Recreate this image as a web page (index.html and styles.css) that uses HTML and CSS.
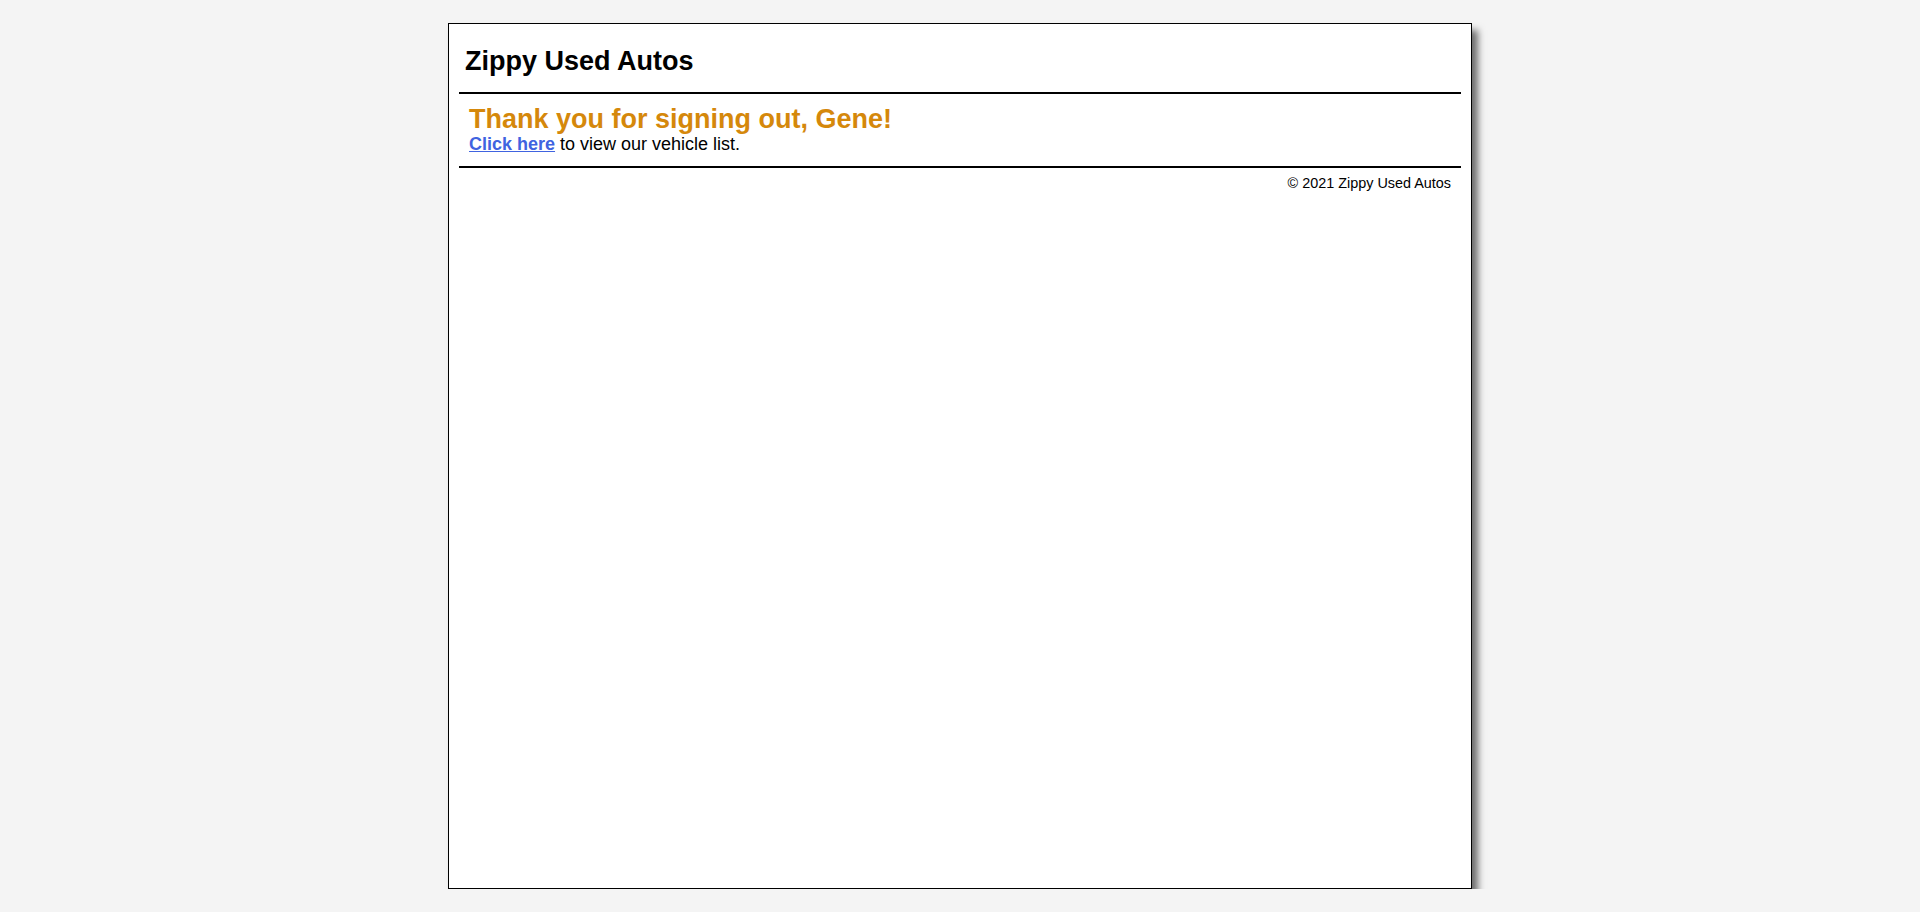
FILE: index.html
```html
<!DOCTYPE html>
<html lang="en">
<head>
<meta charset="utf-8">
<title>Zippy Used Autos</title>
<link rel="stylesheet" href="styles.css">
</head>
<body>
<div class="page">
  <header class="site-header">
    <h1 class="site-title">Zippy Used Autos</h1>
  </header>
  <main class="content">
    <h2 class="signout-heading">Thank you for signing out, Gene!</h2>
    <p class="signout-text"><a class="vehicle-link" href="#">Click here</a> to view our vehicle list.</p>
  </main>
  <footer class="site-footer">© 2021 Zippy Used Autos</footer>
</div>
</body>
</html>
```

FILE: styles.css
```css
html, body {
  margin: 0;
  padding: 0;
}

body {
  background: #f4f4f4;
  font-family: "Liberation Sans", Arial, sans-serif;
  font-size: 18px;
  color: #000;
  padding-top: 23px;
}

.page {
  box-sizing: border-box;
  width: 1024px;
  height: 866px;
  margin: 0 auto;
  background: #fff;
  border: 1px solid #000;
  padding: 10px;
  box-shadow: 6px 7px 7px #6e6e6e;
}

.site-header {
  border-bottom: 2px solid #000;
  padding: 12px 6px 15px;
}

.site-title {
  margin: 0;
  font-size: 27px;
  line-height: 31px;
  font-weight: bold;
}

.content {
  border-bottom: 2px solid #000;
  padding: 10px 10px 12px;
}

.signout-heading {
  margin: 0;
  font-size: 27px;
  line-height: 30px;
  font-weight: bold;
  color: #d5880b;
}

.signout-text {
  margin: 0;
  font-size: 18px;
  line-height: 20px;
}

.vehicle-link {
  color: #4063e0;
  font-weight: bold;
  text-decoration: underline;
}

.site-footer {
  text-align: right;
  font-size: 14.4px;
  padding: 7px 10px 0;
}
```
